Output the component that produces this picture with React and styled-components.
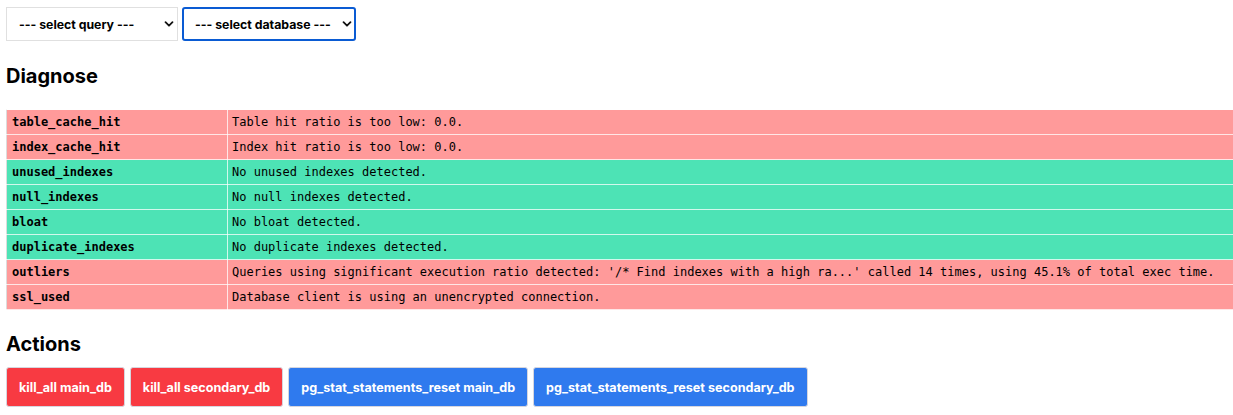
import React from "react";
import styled, { createGlobalStyle } from "styled-components";

const Global = createGlobalStyle`
  html, body { margin: 0; padding: 0; background: #fff; overflow-x: hidden; }
  body { font-family: Inter, "Noto Sans", "Liberation Sans", sans-serif; color: #000; }
`;

const Page = styled.div`
  padding: 7px 0 0 6px;
`;

const Toolbar = styled.div`
  display: flex;
  gap: 4px;
`;

const SelectWrap = styled.div`
  position: relative;
  width: ${(p) => p.$width}px;
  height: 34px;
`;

const Select = styled.select`
  appearance: none;
  -webkit-appearance: none;
  width: 100%;
  height: 100%;
  box-sizing: border-box;
  background: #fff;
  border: ${(p) => (p.$focused ? "2px solid #0a5bd3" : "1px solid #e0e0e0")};
  border-radius: ${(p) => (p.$focused ? "3px" : "0")};
  padding: 0 0 0 ${(p) => (p.$focused ? 11 : 12)}px;
  font-family: Inter, "Noto Sans", sans-serif;
  font-weight: 700;
  font-size: 12.3px;
  color: #000;
  outline: none;
`;

const Chevron = styled.svg`
  position: absolute;
  right: 4px;
  top: 12px;
  width: 10px;
  height: 10px;
  pointer-events: none;
`;

const Heading = styled.h2`
  margin: ${(p) => p.$top}px 0 ${(p) => p.$bottom}px;
  font-size: 20px;
  line-height: 24px;
  font-weight: 700;
`;

const Table = styled.table`
  width: calc(100% + 4px);
  border-collapse: collapse;
  border: 1px solid #dcdcdc;
  font-family: "DejaVu Sans Mono", "Liberation Mono", monospace;
  font-size: 12px;
`;

const Row = styled.tr`
  background: ${(p) => (p.$ok ? "#4de3b5" : "#ff9a9a")};
`;

const KeyCell = styled.td`
  width: 221px;
  height: 24px;
  box-sizing: border-box;
  padding: 0 5px;
  font-weight: 700;
  border: 1px solid rgba(255, 255, 255, 0.75);
  border-left-color: #dcdcdc;
  white-space: nowrap;
`;

const ValueCell = styled.td`
  height: 24px;
  padding: 0 4px;
  border: 1px solid rgba(255, 255, 255, 0.75);
  white-space: nowrap;
`;

const Buttons = styled.div`
  display: flex;
  gap: 5px;
`;

const Button = styled.button`
  height: 40px;
  box-sizing: border-box;
  padding: 0 ${(p) => p.$pad}px;
  border: 1px solid #d6d6de;
  border-radius: 3px;
  background: ${(p) => (p.$danger ? "#f83a42" : "#2f7aee")};
  color: #fff;
  font-family: Inter, "Noto Sans", sans-serif;
  font-weight: 700;
  font-size: 12.6px;
  cursor: pointer;
`;

const rows = [
  ["table_cache_hit", "Table hit ratio is too low: 0.0.", false],
  ["index_cache_hit", "Index hit ratio is too low: 0.0.", false],
  ["unused_indexes", "No unused indexes detected.", true],
  ["null_indexes", "No null indexes detected.", true],
  ["bloat", "No bloat detected.", true],
  ["duplicate_indexes", "No duplicate indexes detected.", true],
  [
    "outliers",
    "Queries using significant execution ratio detected: '/* Find indexes with a high ra...' called 14 times, using 45.1% of total exec time.",
    false,
  ],
  ["ssl_used", "Database client is using an unencrypted connection.", false],
];

const ChevronIcon = () => (
  <Chevron viewBox="0 0 10 10">
    <path d="M1.5 3.2 L5 6.7 L8.5 3.2" fill="none" stroke="#111" strokeWidth="1.8" strokeLinecap="round" strokeLinejoin="round" />
  </Chevron>
);

export default function App() {
  return (
    <Page>
      <Global />
      <Toolbar>
        <SelectWrap $width={172}>
          <Select defaultValue="">
            <option value="">--- select query ---</option>
          </Select>
          <ChevronIcon />
        </SelectWrap>
        <SelectWrap $width={174}>
          <Select $focused defaultValue="">
            <option value="">--- select database ---</option>
          </Select>
          <ChevronIcon />
        </SelectWrap>
      </Toolbar>
      <Heading $top={23} $bottom={21}>Diagnose</Heading>
      <Table>
        <tbody>
          {rows.map(([k, v, ok]) => (
            <Row key={k} $ok={ok}>
              <KeyCell>{k}</KeyCell>
              <ValueCell>{v}</ValueCell>
            </Row>
          ))}
        </tbody>
      </Table>
      <Heading $top={22} $bottom={11}>Actions</Heading>
      <Buttons>
        <Button $danger $pad={12}>kill_all main_db</Button>
        <Button $danger $pad={12}>kill_all secondary_db</Button>
        <Button $pad={12}>pg_stat_statements_reset main_db</Button>
        <Button $pad={12}>pg_stat_statements_reset secondary_db</Button>
      </Buttons>
    </Page>
  );
}
